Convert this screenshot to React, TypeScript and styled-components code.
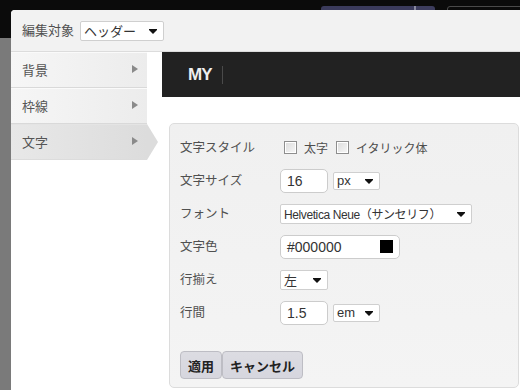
import React from 'react'
import styled, { createGlobalStyle, css } from 'styled-components'

const GlobalStyle = createGlobalStyle`
  html, body {
    margin: 0;
    padding: 0;
    width: 520px;
    height: 390px;
    overflow: hidden;
  }
  body {
    font-family: "Liberation Sans", "Noto Sans CJK JP", sans-serif;
    background: #7a7a7a;
  }
  * { box-sizing: border-box; }
`

const Page = styled.div`
  position: relative;
  width: 520px;
  height: 390px;
  overflow: hidden;
  background: #7a7a7a;
`

const TopBar = styled.div`
  height: 38px;
  background: #0b0b0b;
  display: flex;
  align-items: flex-start;
  padding: 6px 0 0 321px;
`

const BarButton = styled.div`
  width: 114px;
  height: 26px;
  flex-shrink: 0;
  border-radius: 3px;
  background: linear-gradient(to right, #3b3b5c 82%, #8a8aa0 82%, #8a8aa0 83%, #3d3d5e 83%);
`

const BarOutline = styled.div`
  width: 90px;
  height: 26px;
  flex-shrink: 0;
  margin-left: 12px;
  border-radius: 3px;
  border: 1px solid #4a4a4a;
`

const Dialog = styled.div`
  position: absolute;
  left: 11px;
  top: 10px;
  right: 0;
  bottom: 0;
  background: #fff;
  border-top-left-radius: 4px;
  display: flex;
  flex-direction: column;
  overflow: hidden;
`

const Header = styled.div`
  height: 42px;
  flex-shrink: 0;
  background: #f2f2f2;
  border-bottom: 1px solid #dcdcdc;
  display: flex;
  align-items: center;
  padding-left: 11px;
  gap: 6px;
`

const Label = styled.span<{ $size?: number }>`
  font-size: ${p => p.$size ?? 12.5}px;
  line-height: 16px;
  color: #505050;
  white-space: nowrap;
`

const SelectBox = styled.div<{ $w: number; $h?: number; $tight?: boolean }>`
  position: relative;
  width: ${p => p.$w}px;
  height: ${p => p.$h ?? 20}px;
  background: #fff;
  border: 1px solid #cfcfcf;
  border-radius: 2px;
  display: flex;
  align-items: center;
  padding-left: 3px;
  font-size: ${p => (p.$tight ? 12 : 13)}px;
  letter-spacing: ${p => (p.$tight ? '-0.4px' : '0')};
  color: #333;
  white-space: nowrap;

  &::after {
    content: '';
    position: absolute;
    right: 6px;
    top: 50%;
    margin-top: -1px;
    border-left: 4px solid transparent;
    border-right: 4px solid transparent;
    border-top: 4px solid #111;
  }
  &::before {
    content: '';
    position: absolute;
    right: 6px;
    top: 50%;
    margin-top: -2px;
    width: 8px;
    height: 1px;
    background: #111;
  }
`

const Body = styled.div`
  flex: 1;
  display: flex;
  min-height: 0;
`

const Menu = styled.div`
  width: 136px;
  flex-shrink: 0;
  display: flex;
  flex-direction: column;
`

const MenuItem = styled.div<{ $active?: boolean }>`
  position: relative;
  height: 36px;
  display: flex;
  align-items: center;
  justify-content: space-between;
  padding: 0 9px 2px 11px;
  border-top: 1px solid #fafafa;
  border-bottom: 1px solid #d9d9d9;
  background: linear-gradient(to right, #f6f6f6, #ececec);
  font-size: 13px;
  color: #555;

  ${p =>
    p.$active &&
    css`
      background: linear-gradient(to right, #e8e8e8, #dcdcdc);
      border-top-color: #e4e4e4;
      border-bottom-color: #dcdcdc;
      &::after {
        content: '';
        position: absolute;
        left: 100%;
        top: -1px;
        border-left: 11px solid #dcdcdc;
        border-top: 18px solid transparent;
        border-bottom: 18px solid transparent;
      }
    `}
`

const MenuArrow = styled.span`
  width: 0;
  height: 0;
  border-left: 6px solid #8a8a8a;
  border-top: 4px solid transparent;
  border-bottom: 4px solid transparent;
`

const Content = styled.div`
  flex: 1;
  display: flex;
  flex-direction: column;
  min-width: 0;
`

const PreviewBar = styled.div`
  margin-left: 15px;
  height: 45px;
  background: #222;
  display: flex;
  align-items: center;
  padding-left: 26px;
  gap: 10px;
`

const Brand = styled.span`
  font-family: "Liberation Sans", sans-serif;
  font-weight: bold;
  font-size: 17px;
  letter-spacing: -1px;
  color: #eee;
`

const BrandDivider = styled.span`
  width: 1px;
  height: 18px;
  background: #4a4a4a;
`

const Panel = styled.div`
  margin: 26px 1px 0 22px;
  height: 265px;
  background: linear-gradient(#f0f0f0, #f4f4f4);
  border: 1px solid #dcdcdc;
  border-radius: 5px;
  padding: 7px 10px 7px 10px;
  display: flex;
  flex-direction: column;
`

const Form = styled.div`
  display: grid;
  grid-template-columns: 100px 1fr;
  grid-auto-rows: 33px;
  align-items: center;
`

const Field = styled.div`
  display: flex;
  align-items: center;
  gap: 5px;
`

const CheckGroup = styled.label`
  display: flex;
  align-items: center;
  gap: 7px;
  margin-right: 3px;
  font-size: 12px;
  color: #4d4d4d;

  &:first-child {
    margin-left: 4px;
  }
`

const CheckBox = styled.span`
  width: 13px;
  height: 13px;
  border: 1px solid #8e8e8e;
  background: linear-gradient(135deg, #dcdcdc, #f7f7f7);
  box-shadow: inset 0 0 0 1px #fff;
`

const TextInput = styled.div<{ $w: number }>`
  position: relative;
  width: ${p => p.$w}px;
  height: 24px;
  background: #fff;
  border: 1px solid #cccccc;
  border-radius: 5px;
  display: flex;
  align-items: center;
  justify-content: space-between;
  padding: 0 6px;
  font-size: 14px;
  color: #333;
`

const Swatch = styled.span<{ $color: string }>`
  width: 13px;
  height: 13px;
  background: ${p => p.$color};
`

const Buttons = styled.div`
  display: flex;
  margin-top: 22px;
`

const Button = styled.button`
  height: 28px;
  padding: 0 7px;
  background: linear-gradient(#dcdce2, #d6d6de);
  border: 1px solid #bdbdc4;
  border-radius: 4px;
  font-family: "Liberation Sans", "Noto Sans CJK JP", sans-serif;
  font-size: 13px;
  font-weight: bold;
  color: #222;
`

const menuItems = ['背景', '枠線', '文字']

export default function App() {
  return (
    <Page>
      <GlobalStyle />
      <TopBar>
        <BarButton />
        <BarOutline />
      </TopBar>
      <Dialog>
        <Header>
          <Label $size={13}>編集対象</Label>
          <SelectBox $w={84}>ヘッダー</SelectBox>
        </Header>
        <Body>
          <Menu>
            {menuItems.map(item => (
              <MenuItem key={item} $active={item === '文字'}>
                {item}
                <MenuArrow />
              </MenuItem>
            ))}
          </Menu>
          <Content>
            <PreviewBar>
              <Brand>MY</Brand>
              <BrandDivider />
            </PreviewBar>
            <Panel>
              <Form>
                <Label>文字スタイル</Label>
                <Field>
                  <CheckGroup>
                    <CheckBox />
                    太字
                  </CheckGroup>
                  <CheckGroup>
                    <CheckBox />
                    イタリック体
                  </CheckGroup>
                </Field>

                <Label>文字サイズ</Label>
                <Field>
                  <TextInput $w={48}>16</TextInput>
                  <SelectBox $w={47} $h={18}>px</SelectBox>
                </Field>

                <Label>フォント</Label>
                <Field>
                  <SelectBox $w={192} $tight>Helvetica Neue（サンセリフ）</SelectBox>
                </Field>

                <Label>文字色</Label>
                <Field>
                  <TextInput $w={120}>
                    #000000
                    <Swatch $color="#000" />
                  </TextInput>
                </Field>

                <Label>行揃え</Label>
                <Field>
                  <SelectBox $w={48}>左</SelectBox>
                </Field>

                <Label>行間</Label>
                <Field>
                  <TextInput $w={48}>1.5</TextInput>
                  <SelectBox $w={47} $h={18}>em</SelectBox>
                </Field>
              </Form>
              <Buttons>
                <Button>適用</Button>
                <Button>キャンセル</Button>
              </Buttons>
            </Panel>
          </Content>
        </Body>
      </Dialog>
    </Page>
  )
}
